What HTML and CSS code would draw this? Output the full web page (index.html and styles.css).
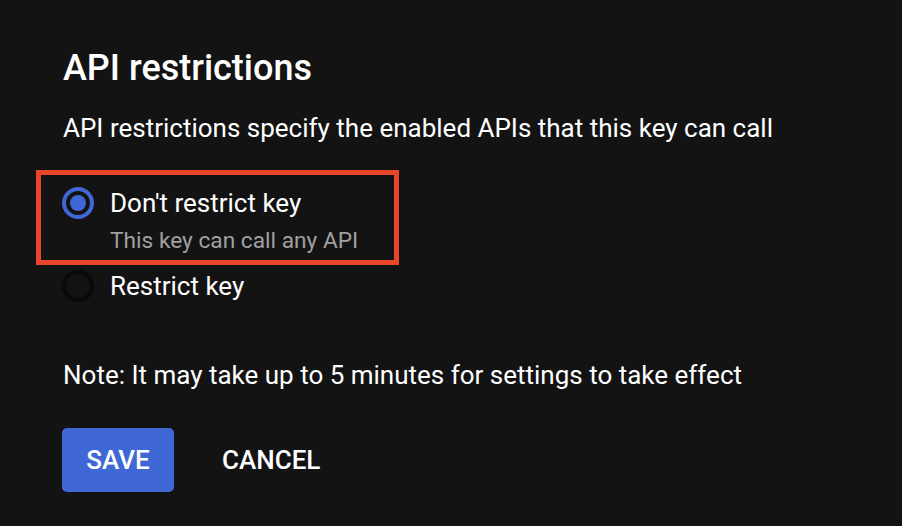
FILE: index.html
```html
<!DOCTYPE html>
<html>
<head>
<meta charset="utf-8">
<link rel="stylesheet" href="styles.css">
</head>
<body>
<main class="panel">
  <h1 class="title">API restrictions</h1>
  <p class="desc">API restrictions specify the enabled APIs that this key can call</p>
  <div class="options">
    <div class="highlight">
      <label class="option">
        <span class="radio checked"><span class="dot"></span></span>
        <span class="option-text">
          <span class="option-label">Don't restrict key</span>
          <span class="option-sub">This key can call any API</span>
        </span>
      </label>
    </div>
    <label class="option option-plain">
      <span class="radio"></span>
      <span class="option-text">
        <span class="option-label">Restrict key</span>
      </span>
    </label>
  </div>
  <p class="note">Note: It may take up to 5 minutes for settings to take effect</p>
  <div class="actions">
    <button class="btn btn-primary">SAVE</button>
    <button class="btn btn-text">CANCEL</button>
  </div>
</main>
</body>
</html>
```

FILE: styles.css
```css
html, body {
  margin: 0;
  padding: 0;
  background: #131313;
  height: 100%;
}
body {
  font-family: Roboto, "Noto Sans", sans-serif;
  color: #ffffff;
  overflow: hidden;
}
.panel {
  padding: 46px 0 0 63px;
}
.title {
  margin: 0;
  font-size: 36px;
  font-weight: 500;
  line-height: 44px;
}
.desc {
  margin: 23px 0 0;
  font-size: 26px;
  line-height: 30px;
}
.options {
  margin-top: 27px;
  margin-left: -27px;
}
.highlight {
  display: inline-block;
  border: 5px solid #e9452b;
  padding: 11px 36px 4px 21px;
}
.option {
  display: flex;
  align-items: flex-start;
  gap: 16px;
}
.option-plain {
  padding-left: 26px;
  margin-top: 4px;
}
.radio {
  width: 32px;
  height: 32px;
  box-sizing: border-box;
  border-radius: 50%;
  border: 4px solid #0a0a0a;
  display: flex;
  align-items: center;
  justify-content: center;
  flex: none;
  margin-top: 1px;
}
.radio.checked {
  border-color: #3f68d6;
}
.dot {
  width: 16px;
  height: 16px;
  border-radius: 50%;
  background: #3f68d6;
}
.option-text {
  display: flex;
  flex-direction: column;
}
.option-label {
  font-size: 26px;
  line-height: 34px;
}
.option-sub {
  margin-top: 6px;
  font-size: 22.7px;
  line-height: 30px;
  color: #a0a0a0;
}
.note {
  margin: 57px 0 0;
  font-size: 26px;
  line-height: 30px;
}
.actions {
  margin-top: 38px;
  display: flex;
  align-items: center;
  gap: 24px;
  margin-left: -1px;
}
.btn {
  font-family: Roboto, sans-serif;
  font-size: 26px;
  font-weight: 500;
  border: none;
  height: 64px;
  border-radius: 5px;
  padding: 0 24px;
  cursor: pointer;
}
.btn-primary {
  background: #3f68d6;
  color: #ffffff;
  width: 112px;
  padding: 0;
}
.btn-text {
  background: transparent;
  color: #ffffff;
}
```
